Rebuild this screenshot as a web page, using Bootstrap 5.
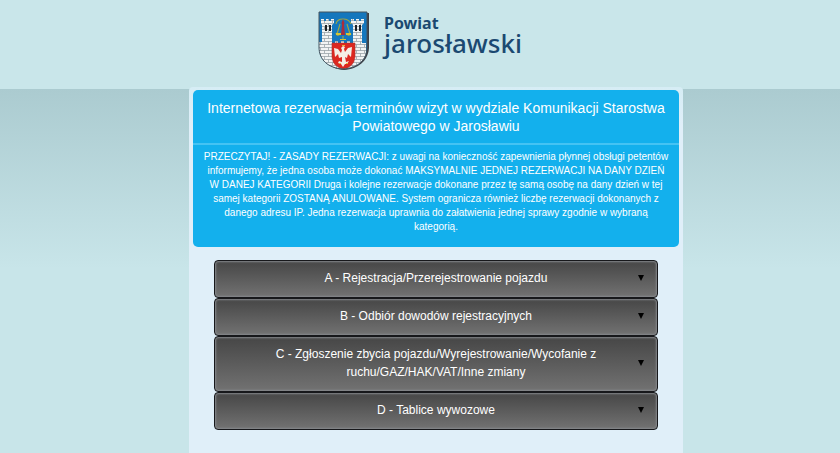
<!DOCTYPE html>
<html lang="pl">
<head>
<meta charset="utf-8">
<meta name="viewport" content="width=device-width, initial-scale=1">
<title>Powiat jarosławski – rezerwacja wizyt</title>
<link href="https://cdn.jsdelivr.net/npm/bootstrap@5.3.0/dist/css/bootstrap.min.css" rel="stylesheet">
<style>
  body { font-family: "Liberation Sans", Arial, sans-serif; background: #c8e5e9; }
  .site-header { background: #c9e6ea; padding: 11px 0 19px; }
  .site-logo { color: #1b4971; font-family: "Noto Sans", "Open Sans", sans-serif; gap: 15px; }
  .site-logo svg { width: 51px; height: 59px; }
  .logo-top { font-size: 16px; line-height: 16px; font-weight: 700; }
  .logo-main { font-size: 26px; line-height: 24px; font-weight: 500; }
  .site-main { background: linear-gradient(#abcbd0, #c8e5e9 180px); padding-left: 32px; }
  .booking-panel { max-width: 494px; margin-top: -2px; padding: 3px 4px 23px; border-radius: 4px 4px 0 0;
    background: linear-gradient(#d6edf5, #e0eff9 40px); }
  .notice { background: #13b0ed; border-radius: 5px; }
  .notice h1 { font-size: 14px; line-height: 18px; padding: 9px 2px 8px; }
  .notice-rules { border-top: 2px solid #45c3f3; font-size: 10px; line-height: 14px; padding: 5px 10px 13px; }
  .categories { padding: 13px 21px 0; }
  .category { color: #fff; font-size: 12px; line-height: 18px; padding: 8px 12px 10px; border: 1px solid #17181b;
    border-radius: 4px; background: linear-gradient(#464646, #727272); box-shadow: inset 0 0 2px 1px #85888c; }
  .category .label-text { padding-left: 8px; }
  .category svg { width: 8px; height: 6px; }
</style>
<script src="https://cdn.jsdelivr.net/npm/bootstrap@5.3.0/dist/js/bootstrap.bundle.min.js"></script>
</head>
<body class="min-vh-100 d-flex flex-column">
<header class="site-header d-flex justify-content-center">
  <a href="#" class="site-logo d-flex text-decoration-none">
    <svg viewBox="0 0 51 59" aria-hidden="true">
      <defs>
        <clipPath id="shield"><path d="M1 1H49V36C49 49 40 57 25 58C10 57 1 49 1 36Z"/></clipPath>
        <pattern id="brick" width="8" height="6" patternUnits="userSpaceOnUse">
          <path fill="#f2f4f4" d="M0 0h8v6H0z"/><path d="M0 .5h8M0 3.5h8M2.500.5v3M6.500 3.500v3" stroke="#8e989d" stroke-width=".7"/>
        </pattern>
      </defs>
      <path d="M3 2H51V37C50 50 40 58 26 59C12 58 3 50 3 37Z" fill="#3c3f46"/>
      <g clip-path="url(#shield)">
        <path fill="#1577bd" d="M0 0h51v59H0z"/>
        <path fill="url(#brick)" d="M3 8h3v2h2V8h3v2h2V8h3v4l-2 2v18h3v-2h3v2h3v-2h3v2h3v-2h3v2h3V14l-2-2V8h3v2h2V8h3v2h2V8h3v4l-2 2v18h4v27H0V31h4V14l-1-2Z"/>
        <path d="M7 14h2v6H7zM11 14h2v6h-2zM37 14h2v6h-2zM41 14h2v6h-2z" fill="#1d2328"/>
        <path d="M18 13Q19 8 25 8T33 13M25 25v4M18 22q1 4 4 1M28 22q2 4 5 1M19 23l3-10M32 23l-3-10" fill="none" stroke="#9aa548" stroke-width="1.200"/>
        <path d="M25 8l1.500 4-.5 2 1 10h-4l1-10-.5-2Z" fill="#a92d3c"/>
        <path d="M18 22h5v2h-5zM28 22h5v2h-5zM22 28h6v1h-6z" fill="#d5c535"/>
        <path d="M14 32H37V46Q36 56 25.500 58Q15 56 14 46Z" fill="#dc2820" stroke="#a83430" stroke-width=".6"/>
        <path d="M25 35l2 1-1 2 1 3 3-4 4-1-1 10-3-3-1 4-2-1 1 5 3-1-2 3-2 0-2 3-2-3-3-1 1-2 3 1 0-5-3 1-1-4-3 3-1-9 4 1 3 4 1-3-1-2Z" fill="#f5eee5"/>
        <path d="M24 34h3v1h-3zM21 52h2v1h-2zM28 52h2v1h-2z" fill="#e6b83c"/>
      </g>
      <path d="M1 1H49V36C49 49 40 57 25 58C10 57 1 49 1 36Z" fill="none" stroke="#44545e"/>
    </svg>
    <span class="d-flex flex-column pt-1"><span class="logo-top">Powiat</span><span class="logo-main">jarosławski</span></span>
  </a>
</header>
<main class="site-main flex-grow-1 d-flex flex-column">
  <div class="booking-panel w-100 mx-auto flex-grow-1">
    <section class="notice text-white text-center">
      <h1 class="mb-0 fw-normal">Internetowa rezerwacja terminów wizyt w wydziale Komunikacji Starostwa<br>Powiatowego w Jarosławiu</h1>
      <p class="notice-rules mb-0">PRZECZYTAJ! - ZASADY REZERWACJI: z uwagi na konieczność zapewnienia płynnej obsługi petentów<br>informujemy, że jedna osoba może dokonać MAKSYMALNIE JEDNEJ REZERWACJI NA DANY DZIEŃ<br>W DANEJ KATEGORII Druga i kolejne rezerwacje dokonane przez tę samą osobę na dany dzień w tej<br>samej kategorii ZOSTANĄ ANULOWANE. System ogranicza również liczbę rezerwacji dokonanych z<br>danego adresu IP. Jedna rezerwacja uprawnia do załatwienia jednej sprawy zgodnie w wybraną<br>kategorią.</p>
    </section>
    <div class="categories d-flex flex-column">
      <button type="button" class="category d-flex align-items-center"><span class="label-text flex-grow-1">A - Rejestracja/Przerejestrowanie pojazdu</span><svg class="flex-shrink-0" viewBox="0 0 8 6" aria-hidden="true"><path d="M1 0h6L4 6Z"/></svg></button>
      <button type="button" class="category d-flex align-items-center"><span class="label-text flex-grow-1">B - Odbiór dowodów rejestracyjnych</span><svg class="flex-shrink-0" viewBox="0 0 8 6" aria-hidden="true"><path d="M1 0h6L4 6Z"/></svg></button>
      <button type="button" class="category d-flex align-items-center"><span class="label-text flex-grow-1">C - Zgłoszenie zbycia pojazdu/Wyrejestrowanie/Wycofanie z<br>ruchu/GAZ/HAK/VAT/Inne zmiany</span><svg class="flex-shrink-0" viewBox="0 0 8 6" aria-hidden="true"><path d="M1 0h6L4 6Z"/></svg></button>
      <button type="button" class="category d-flex align-items-center"><span class="label-text flex-grow-1">D - Tablice wywozowe</span><svg class="flex-shrink-0" viewBox="0 0 8 6" aria-hidden="true"><path d="M1 0h6L4 6Z"/></svg></button>
    </div>
  </div>
</main>
</body>
</html>
